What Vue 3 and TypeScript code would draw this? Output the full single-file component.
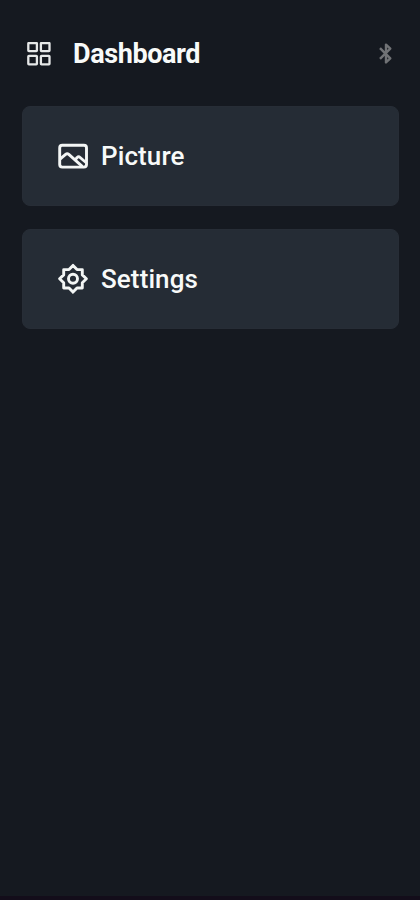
<script setup lang="ts">
interface MenuItem {
  id: 'picture' | 'settings'
  label: string
}

const items: MenuItem[] = [
  { id: 'picture', label: 'Picture' },
  { id: 'settings', label: 'Settings' },
]
</script>

<template>
  <main class="screen">
    <header class="header">
      <svg class="grid-icon" viewBox="0 0 24 24" aria-hidden="true">
        <rect x="1.3" y="1" width="8.6" height="8.2" rx="0.6" />
        <rect x="13.9" y="1" width="8.6" height="8.2" rx="0.6" />
        <rect x="1.3" y="13.8" width="8.6" height="8.6" rx="0.6" />
        <rect x="13.9" y="13.8" width="8.6" height="8.6" rx="0.6" />
      </svg>
      <h1 class="title">Dashboard</h1>
      <svg class="bluetooth" viewBox="0 0 14 23" aria-hidden="true">
        <path d="M2 6.2 12.3 16.4 8 20.4V2.6L12.3 6.6 2 16.8" />
      </svg>
    </header>
    <nav class="menu">
      <button v-for="item in items" :key="item.id" class="card" type="button">
        <svg v-if="item.id === 'picture'" class="icon" viewBox="0 0 32 32" aria-hidden="true">
          <rect x="2.7" y="5.3" width="26.8" height="21.8" rx="2.6" />
          <path d="M3 19.2 8.6 14.3Q10.2 13 11.8 14.3L25.5 26.6M18.2 19.8 20.1 17.5Q21.6 16.2 23.1 17.5L29 22.5" />
        </svg>
        <svg v-else class="icon" viewBox="0 0 32 32" aria-hidden="true">
          <path d="M16 2.4 20 6.6H25.3V11.9L29.4 15.8 25.3 19.7V25H20L16 29.1 12 25H6.7V19.7L2.6 15.8 6.7 11.9V6.6H12Z" />
          <circle cx="16" cy="15.8" r="4.5" />
        </svg>
        <span>{{ item.label }}</span>
      </button>
    </nav>
  </main>
</template>

<style>
body {
  background: #151920;
}
</style>

<style scoped>
.screen {
  box-sizing: border-box;
  height: 900px;
  padding: 33px 21px 0 22px;
  background: #151920;
  border-bottom: 4px solid #130d1a;
  color: #f8faf9;
  font-family: Roboto, sans-serif;
}

.header {
  display: flex;
  align-items: center;
  height: 41px;
  padding: 0 7px 0 5px;
}

.grid-icon {
  width: 24px;
  height: 24px;
  fill: none;
  stroke: #e5e7e7;
  stroke-width: 2.3;
}

.title {
  margin: 0 auto 0 22px;
  font-size: 27px;
  line-height: 40px;
  font-weight: 700;
  letter-spacing: -0.4px;
}

.bluetooth {
  width: 14px;
  height: 23px;
  fill: none;
  stroke: #707275;
  stroke-width: 2.4;
  stroke-linejoin: round;
}

.menu {
  display: flex;
  flex-direction: column;
  gap: 23px;
  margin-top: 32px;
}

.card {
  box-sizing: border-box;
  display: flex;
  align-items: center;
  gap: 12px;
  width: 100%;
  height: 100px;
  padding: 0 0 0 34px;
  border: 1px solid #272d36;
  border-radius: 8px;
  background: #252c35;
  color: inherit;
  font: 500 26px/40px Roboto, sans-serif;
  letter-spacing: 0.1px;
}

.icon {
  width: 32px;
  height: 32px;
  fill: none;
  stroke: #f3f6f5;
  stroke-width: 2.9;
  stroke-linejoin: round;
}
</style>
